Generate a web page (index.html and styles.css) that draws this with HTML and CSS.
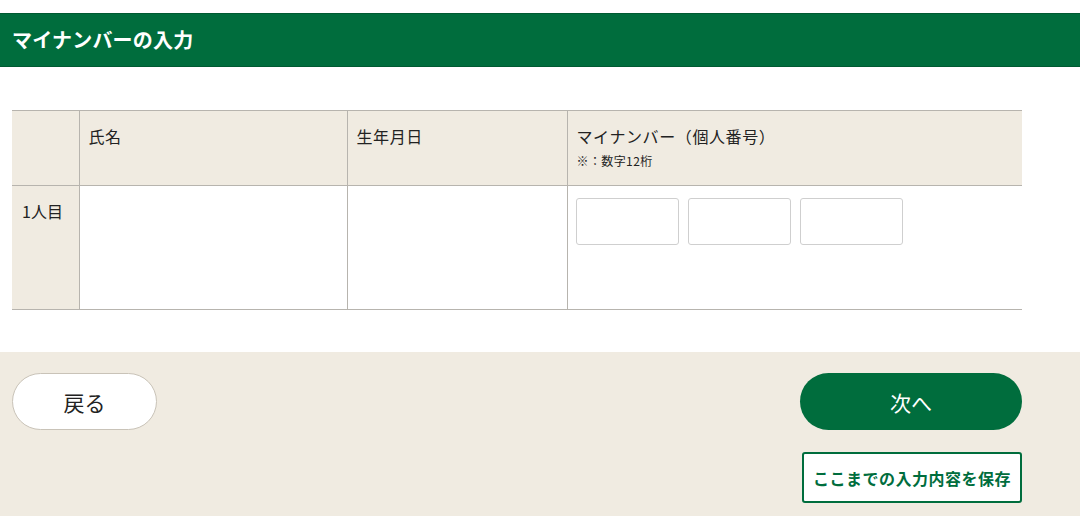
FILE: index.html
```html
<!DOCTYPE html>
<html lang="ja">
<head>
<meta charset="utf-8">
<title>マイナンバーの入力</title>
<link rel="stylesheet" href="styles.css">
</head>
<body>
<header class="page-head">
  <h1 class="page-title">マイナンバーの入力</h1>
</header>
<main class="content">
  <table class="entry-table">
    <thead>
      <tr>
        <th class="col-no"></th>
        <th class="col-name">氏名</th>
        <th class="col-birth">生年月日</th>
        <th class="col-number">マイナンバー（個人番号）<span class="note">※：数字12桁</span></th>
      </tr>
    </thead>
    <tbody>
      <tr>
        <th class="row-label">1人目</th>
        <td></td>
        <td></td>
        <td class="num-cell">
          <div class="num-inputs">
            <input class="num-box" type="text" aria-label="マイナンバー1">
            <input class="num-box" type="text" aria-label="マイナンバー2">
            <input class="num-box" type="text" aria-label="マイナンバー3">
          </div>
        </td>
      </tr>
    </tbody>
  </table>
</main>
<footer class="actions">
  <div class="actions-inner">
    <button class="btn-back" type="button">戻る</button>
    <div class="actions-right">
      <button class="btn-next" type="button">次へ</button>
      <button class="btn-save" type="button">ここまでの入力内容を保存</button>
    </div>
  </div>
</footer>
</body>
</html>
```
FILE: styles.css
```css
* { box-sizing: border-box; }
html, body { margin: 0; padding: 0; background: #fff; }
body {
  font-family: "Noto Sans CJK JP", "Noto Sans", sans-serif;
  color: #222;
  padding-top: 13px;
  padding-bottom: 8px;
}
.page-head {
  background: #006d3d;
  height: 54px;
  display: flex;
  align-items: center;
  padding-left: 12px;
  border-top: 1px solid #005a32;
  border-bottom: 1px solid #005a32;
}
.page-title {
  margin: 0;
  color: #fff;
  font-size: 20px;
  font-weight: 700;
  letter-spacing: 0.2px;
  line-height: 1;
}
.content {
  padding: 43px 0 0 12px;
}
.entry-table {
  width: 1010px;
  border-collapse: collapse;
  table-layout: fixed;
}
.entry-table th,
.entry-table td {
  border-top: 1px solid #b7b4ae;
  border-bottom: 1px solid #b7b4ae;
  border-left: 1px solid #b7b4ae;
  text-align: left;
  vertical-align: top;
  font-weight: 400;
  font-size: 16px;
  line-height: 24px;
}
.entry-table tr > :first-child { border-left: none; }
.entry-table thead th {
  background: #f0ebe1;
  height: 75px;
  padding: 13px 10px 0 9px;
  letter-spacing: 0.6px;
}
.col-no { width: 67px; }
.col-name { width: 268px; }
.col-birth { width: 220px; }
.note {
  display: block;
  font-size: 12px;
  line-height: 16px;
  margin-top: 5px;
  letter-spacing: 0.4px;
}
.entry-table tbody th,
.entry-table tbody td {
  height: 124px;
  padding: 12px 9px;
}
.entry-table tbody .num-cell { padding-left: 8px; }
.entry-table tbody .row-label {
  background: #f0ebe1;
  padding: 13px 10px;
}
.num-inputs {
  display: flex;
  gap: 9px;
}
.num-box {
  width: 103px;
  height: 47px;
  border: 1px solid #cfcfcf;
  border-radius: 3px;
  background: #fff;
  margin: 0;
  font-size: 16px;
}
.actions {
  margin-top: 42px;
  background: #f0ebe1;
  padding: 21px 0 13px 12px;
}
.actions-inner {
  width: 1010px;
  display: flex;
  justify-content: space-between;
  align-items: flex-start;
}
.actions-right {
  display: flex;
  flex-direction: column;
  align-items: flex-end;
  gap: 22px;
}
button { font-family: inherit; cursor: pointer; margin: 0; }
.btn-back {
  width: 145px;
  height: 57px;
  border-radius: 29px;
  border: 1px solid #c9c3b8;
  background: #fff;
  color: #222;
  font-size: 21px;
}
.btn-next {
  width: 222px;
  height: 57px;
  border-radius: 29px;
  border: none;
  background: #006d3d;
  color: #fff;
  font-size: 21px;
}
.btn-save {
  width: 220px;
  height: 51px;
  border-radius: 3px;
  border: 2px solid #006d3d;
  background: #fff;
  color: #006d3d;
  font-size: 16px;
  font-weight: 700;
  letter-spacing: 0.5px;
  padding: 0;
}
```
